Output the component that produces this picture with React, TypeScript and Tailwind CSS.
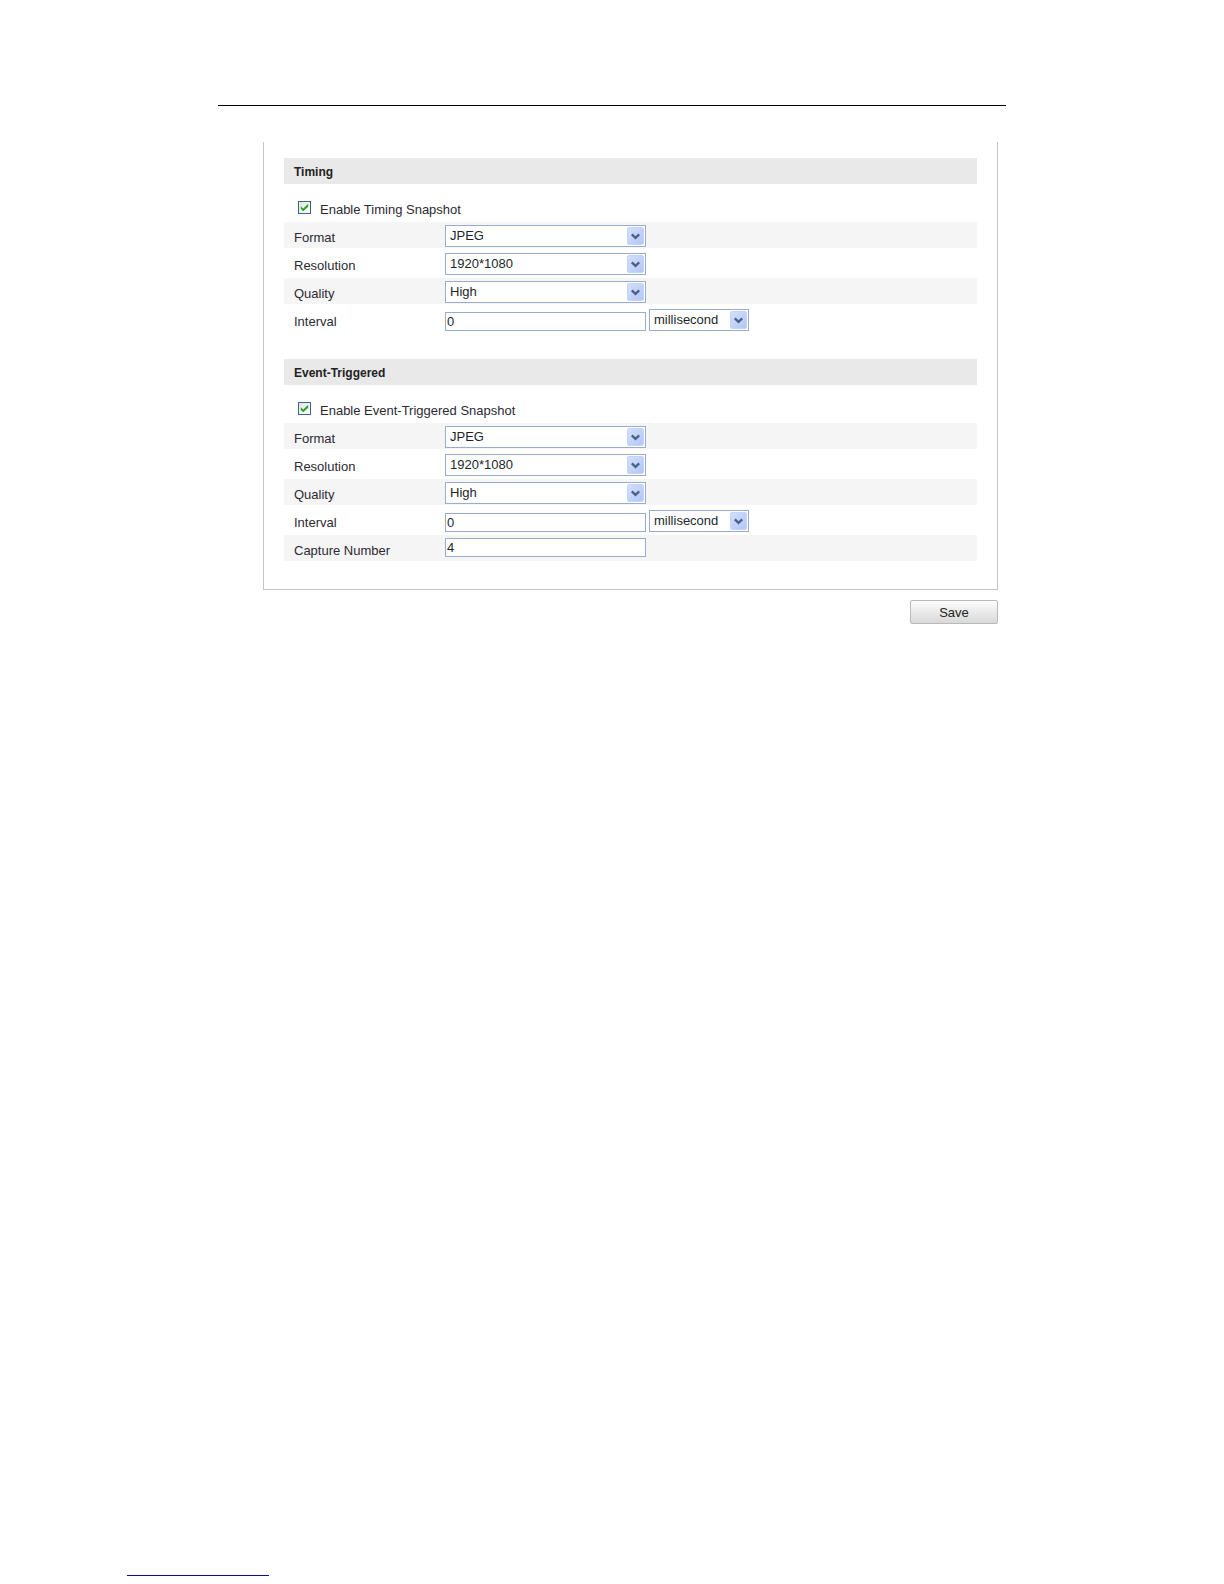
import React, { useState } from "react";

interface SnapshotConfig {
  enabled: boolean;
  format: string;
  resolution: string;
  quality: string;
  interval: string;
  unit: string;
  captureNumber?: string;
}

const DEFAULTS: SnapshotConfig = {
  enabled: true,
  format: "JPEG",
  resolution: "1920*1080",
  quality: "High",
  interval: "0",
  unit: "millisecond",
};

const FORMATS = ["JPEG"];
const RESOLUTIONS = ["1920*1080", "1280*720", "704*576"];
const QUALITIES = ["High", "Medium", "Low"];
const UNITS = ["millisecond", "second", "minute", "hour", "day"];

interface SelectProps {
  id?: string;
  label?: string;
  value: string;
  options: string[];
  width: string;
  onChange: (value: string) => void;
}

function Select({ id, label, value, options, width, onChange }: SelectProps) {
  return (
    <div className={`relative h-[22px] ${width}`}>
      <select
        id={id}
        aria-label={label}
        value={value}
        onChange={(e) => onChange(e.target.value)}
        className="block h-full w-full appearance-none border border-[#9aaccb] bg-white pr-5 pb-px pl-1 text-[13px] leading-4 text-[#221f2b]"
      >
        {options.map((o) => (
          <option key={o}>{o}</option>
        ))}
      </select>
      <span className="pointer-events-none absolute inset-y-[2px] right-[2px] flex w-[17px] items-center justify-center rounded-[2px] border border-[#c3d3fb] bg-linear-to-br from-[#d3e0fc] to-[#b2c7f5]">
        <svg width="9" height="7" viewBox="0 0 9 7" fill="none">
          <path d="M0.8 1.3L4.5 4.8L8.2 1.3" stroke="#4d6185" strokeWidth="2.3" />
        </svg>
      </span>
    </div>
  );
}

interface TextBoxProps {
  id: string;
  value: string;
  onChange: (value: string) => void;
}

function TextBox({ id, value, onChange }: TextBoxProps) {
  return (
    <input
      id={id}
      type="text"
      value={value}
      onChange={(e) => onChange(e.target.value)}
      className="block h-[19px] w-[201px] border border-[#9aaccb] bg-white px-px text-[13px] leading-4 text-[#221f2b]"
    />
  );
}

interface RowProps {
  id: string;
  label: string;
  shaded?: boolean;
  children: React.ReactNode;
}

function Row({ id, label, shaded, children }: RowProps) {
  return (
    <div className={`flex h-[26px] pl-[10px] ${shaded ? "bg-[#f5f5f5]" : ""}`}>
      <label htmlFor={id} className="w-[151px] shrink-0 pt-2 text-[13px] leading-4">
        {label}
      </label>
      <div className="flex items-end gap-[3px] pb-px">{children}</div>
    </div>
  );
}

interface SectionProps {
  prefix: string;
  title: string;
  enableLabel: string;
  initial: SnapshotConfig;
}

function SnapshotSection({ prefix, title, enableLabel, initial }: SectionProps) {
  const [config, setConfig] = useState<SnapshotConfig>(initial);
  const update = (patch: Partial<SnapshotConfig>) => setConfig({ ...config, ...patch });

  return (
    <section>
      <h2 className="h-[26px] bg-[#e9e9e9] pl-[10px] text-[12px] leading-[28px] font-bold text-[#222222]">
        {title}
      </h2>

      {/* ENABLE */}
      <div className="flex h-[38px] items-start gap-[9px] pt-[17px] pl-[14px]">
        <span className="relative size-[13px]">
          <input
            id={`${prefix}-enabled`}
            type="checkbox"
            checked={config.enabled}
            onChange={(e) => update({ enabled: e.target.checked })}
            className="block size-[13px] appearance-none border border-[#3c6488] bg-linear-to-br from-[#e3e5e2] to-white"
          />
          {config.enabled && (
            <svg
              className="pointer-events-none absolute inset-[2px]"
              width="9"
              height="9"
              viewBox="0 0 9 9"
            >
              <path d="M0.8 3.2L3.2 5.4L8.2 0.8V3.8L3.2 8.2L0.8 6Z" fill="#2ba52b" />
            </svg>
          )}
        </span>
        <label htmlFor={`${prefix}-enabled`} className="pt-px text-[13px] leading-4">
          {enableLabel}
        </label>
      </div>

      {/* SETTINGS */}
      <div className="flex flex-col gap-[2px]">
        <Row id={`${prefix}-format`} label="Format" shaded>
          <Select
            id={`${prefix}-format`}
            value={config.format}
            options={FORMATS}
            width="w-[201px]"
            onChange={(format) => update({ format })}
          />
        </Row>
        <Row id={`${prefix}-resolution`} label="Resolution">
          <Select
            id={`${prefix}-resolution`}
            value={config.resolution}
            options={RESOLUTIONS}
            width="w-[201px]"
            onChange={(resolution) => update({ resolution })}
          />
        </Row>
        <Row id={`${prefix}-quality`} label="Quality" shaded>
          <Select
            id={`${prefix}-quality`}
            value={config.quality}
            options={QUALITIES}
            width="w-[201px]"
            onChange={(quality) => update({ quality })}
          />
        </Row>
        <Row id={`${prefix}-interval`} label="Interval">
          <TextBox
            id={`${prefix}-interval`}
            value={config.interval}
            onChange={(interval) => update({ interval })}
          />
          <Select
            label="Interval unit"
            value={config.unit}
            options={UNITS}
            width="w-[100px]"
            onChange={(unit) => update({ unit })}
          />
        </Row>
        {config.captureNumber !== undefined && (
          <Row id={`${prefix}-capture`} label="Capture Number" shaded>
            <div className="self-center">
              <TextBox
                id={`${prefix}-capture`}
                value={config.captureNumber}
                onChange={(captureNumber) => update({ captureNumber })}
              />
            </div>
          </Row>
        )}
      </div>
    </section>
  );
}

export default function App() {
  return (
    <div className="flex min-h-screen flex-col bg-white font-['Liberation_Sans',Arial,sans-serif] text-[#2d2933]">
      <main className="mx-auto w-full max-w-[788px] pt-[105px]">
        <hr className="border-t border-black" />

        <form className="mt-9 mr-2 ml-[45px]" onSubmit={(e) => e.preventDefault()}>
          <div className="flex flex-col gap-[27px] border-x border-b border-[#c4c4c4] px-5 pt-4 pb-7">
            <SnapshotSection
              prefix="timing"
              title="Timing"
              enableLabel="Enable Timing Snapshot"
              initial={DEFAULTS}
            />
            <SnapshotSection
              prefix="event"
              title="Event-Triggered"
              enableLabel="Enable Event-Triggered Snapshot"
              initial={{ ...DEFAULTS, captureNumber: "4" }}
            />
          </div>

          <div className="mt-[10px] flex justify-end">
            <button
              type="submit"
              className="h-6 w-[88px] rounded-[2px] border border-[#b9b9b9] bg-linear-to-b from-[#fcfcfc] to-[#d9d9d9] pt-px text-[13px] leading-4 text-[#222222]"
            >
              Save
            </button>
          </div>
        </form>
      </main>

      <footer className="mt-auto px-[127px] pb-2">
        <div className="h-px w-[142px] bg-[#10108c]" />
      </footer>
    </div>
  );
}
